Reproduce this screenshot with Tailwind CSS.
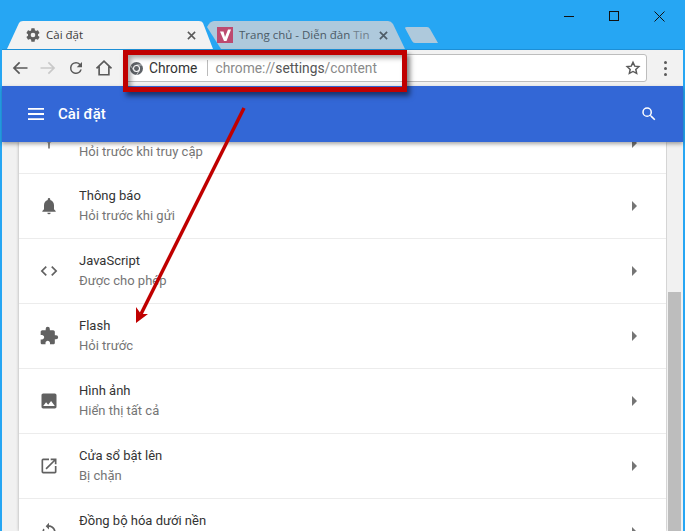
<!DOCTYPE html>
<html lang="vi">
<head>
  <meta charset="UTF-8">
  <title>Cài đặt</title>
  <script src="https://cdn.jsdelivr.net/npm/@tailwindcss/browser@4"></script>
</head>
<body class="w-[685px] h-[531px] overflow-hidden bg-white font-['Roboto',sans-serif]">
<div class="relative w-[685px] h-[531px] overflow-hidden bg-[#26a6f3] pl-[2px] pr-[2px] flex flex-col">
  <!-- title bar + tabs -->
  <div class="relative h-[49px] shrink-0 flex items-end pl-[5px]">
    <div class="relative w-[206px] h-[28px] shrink-0 flex items-center pl-[18px] pr-[17px]">
      <svg class="absolute inset-0" width="206" height="28" viewBox="0 0 206 28"><path d="M0 28 L12 2 Q13 0 16 0 L192 0 Q195 0 196 2 L206 28 Z" fill="#f2f2f2"/></svg>
      <svg class="relative mr-[5px]" width="16" height="16" viewBox="0 0 24 24" fill="#5f5f5f"><path d="M19.400 13c.04-.32.1-.66.1-1s-.06-.68-.1-1l2.100-1.650c.2-.15.25-.42.13-.64l-2-3.460c-.12-.22-.4-.3-.6-.22l-2.500 1c-.52-.4-1.080-.73-1.700-.98l-.37-2.650A.5.5 0 0 0 14 2h-4a.5.5 0 0 0-.5.42l-.37 2.650c-.62.25-1.180.59-1.700.98l-2.500-1c-.22-.08-.48 0-.6.22l-2 3.460c-.13.22-.07.49.12.64L4.570 11c-.04.32-.07.66-.07 1s.03.68.07 1l-2.100 1.650c-.2.15-.25.42-.13.64l2 3.460c.12.22.4.3.6.22l2.500-1c.52.4 1.080.73 1.700.98l.37 2.650c.04.24.25.42.5.42h4c.25 0 .46-.18.5-.42l.37-2.650c.62-.25 1.180-.59 1.700-.98l2.500 1c.22.08.48 0 .6-.22l2-3.460c.12-.22.07-.49-.12-.64L19.400 13zM12 15.500a3.500 3.500 0 1 1 0-7 3.500 3.500 0 0 1 0 7z"/></svg>
      <span class="relative text-[11.500px] text-[#3c3c3c] font-['Open_Sans',sans-serif]">Cài đặt</span>
      <svg class="relative ml-auto" width="9" height="9" viewBox="0 0 10 10" stroke="#5a5a5a" stroke-width="1.700"><path d="M1 1l8 8M9 1l-8 8"/></svg>
    </div>
    <div class="relative -ml-[6px] w-[198px] h-[28px] shrink-0 flex items-center pl-[10px] pr-[17px]">
      <svg class="absolute inset-0" width="198" height="28" viewBox="0 0 198 28"><path d="M0 6 Q3 0 7 0 L181 0 Q184 0 186 3 L198 28 L14 28 Z" fill="#aec9dc"/></svg>
      <svg class="relative mr-[6px] shrink-0" width="16" height="16" viewBox="0 0 16 16"><rect width="16" height="16" fill="#bd4a70"/><path d="M3 4.500h3.500L8 10l3-7.500h3L9.500 14H7z" fill="#fff"/></svg>
      <span class="relative text-[11.500px] whitespace-nowrap text-[#4b5a66] font-['Open_Sans',sans-serif]">Trang chủ - Diễn đàn <span class="text-[#71808c]">Tin</span></span>
      <svg class="relative ml-auto" width="9" height="9" viewBox="0 0 10 10" stroke="#4f5d68" stroke-width="1.900"><path d="M1 1l8 8M9 1l-8 8"/></svg>
    </div>
    <svg class="mb-[6px]" width="33" height="16" viewBox="0 0 33 16"><path d="M0 1 Q0 0 2 0 L22 0 Q24 0 25 2 L33 16 L10 16 Q8 16 7 14 Z" fill="#aec9dc"/></svg>
    <!-- window buttons -->
    <div class="absolute top-[10px] right-[18px] flex items-center gap-[35px]">
      <svg width="10" height="12" viewBox="0 0 10 12" stroke="#111"><path d="M0 6.500h10"/></svg>
      <svg width="10" height="10" viewBox="0 0 10 10" fill="none" stroke="#111"><rect x=".5" y=".5" width="9" height="9"/></svg>
      <svg width="11" height="11" viewBox="0 0 11 11" stroke="#111"><path d="M.5.5l10 10M10.500.5l-10 10"/></svg>
    </div>
  </div>

  <!-- toolbar -->
  <div class="h-[37px] shrink-0 bg-[#f2f2f2] flex items-center pl-[9px] pr-[9px] border-t border-[#1d8fd6]">
    <svg width="18" height="18" viewBox="0 0 24 24" fill="none" stroke="#5a5a5a" stroke-width="2.300"><path d="M22 12H4M11.500 4.500 4 12l7.500 7.500"/></svg>
    <svg class="ml-[10px]" width="18" height="18" viewBox="0 0 24 24" fill="none" stroke="#c9c9c9" stroke-width="2.300"><path d="M2 12h18M12.500 4.500 20 12l-7.500 7.500"/></svg>
    <svg class="ml-[10px]" width="18" height="18" viewBox="0 0 24 24" fill="#5a5a5a"><path d="M17.650 6.350A7.960 7.960 0 0 0 12 4a8 8 0 1 0 7.730 10h-2.080A6 6 0 1 1 12 6c1.660 0 3.140.69 4.220 1.780L13 11h7V4l-2.350 2.350z"/></svg>
    <svg class="ml-[10px]" width="18" height="18" viewBox="0 0 24 24" fill="none" stroke="#5a5a5a" stroke-width="2.200"><path d="M2 12.500 12 3l10 9.500M5.500 10v11h13V10"/></svg>
    <div class="ml-[10px] h-[28px] w-[524px] shrink-0 bg-white border border-[#bdbdbd] rounded-[3px] flex items-center pl-[6px] pr-[5px] text-[13.800px]">
      <svg width="13" height="13" viewBox="0 0 24 24" fill="#5f6368"><circle cx="12" cy="12" r="12"/><circle cx="12" cy="12" r="6.500" fill="#fff"/><circle cx="12" cy="12" r="4.500"/><path d="M12 5.500h11M6.400 15.200 1 6M17.600 15.200 12 24" stroke="#fff" stroke-width="1.200"/></svg>
      <span class="ml-[6px] text-[#333]">Chrome</span>
      <span class="ml-[10px] w-px h-[16px] bg-[#bbb]"></span>
      <span class="ml-[7px] text-[#8a8a8a]">chrome://<span class="text-[#555]">settings</span>/content</span>
      <svg class="ml-auto" width="16" height="16" viewBox="0 0 24 24" fill="none" stroke="#5a5a5a" stroke-width="2.200"><path d="M12 3.500l2.600 5.700 6.200.7-4.600 4.200 1.300 6.100L12 17.200l-5.500 3 1.300-6.100L3.200 9.900l6.200-.7z"/></svg>
    </div>
    <div class="ml-[17px] flex flex-col gap-[3px]">
      <span class="w-[3px] h-[3px] rounded-full bg-[#5a5a5a]"></span>
      <span class="w-[3px] h-[3px] rounded-full bg-[#5a5a5a]"></span>
      <span class="w-[3px] h-[3px] rounded-full bg-[#5a5a5a]"></span>
    </div>
  </div>

  <!-- settings header -->
  <div class="relative z-10 h-[56px] shrink-0 bg-[#3367d6] shadow-[0_2px_4px_rgba(0,0,0,0.35)] flex items-center pl-[26px] pr-[25px] text-white">
    <svg width="16" height="12" viewBox="0 0 16 12" fill="#fff"><path d="M0 0h16v1.800H0zM0 5.100h16v1.800H0zM0 10.200h16V12H0z"/></svg>
    <span class="ml-[14px] text-[15px] font-medium">Cài đặt</span>
    <svg class="ml-auto" width="18" height="18" viewBox="0 0 24 24" fill="#fff"><path d="M15.500 14h-.79l-.28-.27A6.470 6.470 0 0 0 16 9.500 6.500 6.500 0 1 0 9.500 16c1.610 0 3.090-.59 4.230-1.570l.27.28v.79l5 4.990L20.490 19l-4.990-5zm-6 0a4.500 4.500 0 1 1 0-9 4.500 4.500 0 0 1 0 9z"/></svg>
  </div>

  <!-- content -->
  <div class="flex-1 min-h-0 bg-[#f1f1f1] flex overflow-hidden">
    <div class="ml-[17px] w-[647px] bg-white shadow-[0_0_3px_rgba(0,0,0,0.3)] flex flex-col">
      <!-- cut-off first row -->
      <div class="h-[32px] shrink-0 border-b border-[#ececec] flex items-end pb-[13px] pr-[29px] relative">
        <svg class="absolute left-[20px] -top-[11px]" width="20" height="20" viewBox="0 0 24 24" fill="none" stroke="#757575" stroke-width="2"><circle cx="12" cy="8" r="5"/><path d="M12 14v7"/></svg>
        <span class="ml-[60px] text-[13px] leading-[16px] text-[#757575]">Hỏi trước khi truy cập</span>
        <span class="absolute right-[29px] -top-[4px] w-0 h-0 border-y-[5px] border-y-transparent border-l-[5px] border-l-[#757575]"></span>
      </div>
      <!-- Thông báo -->
      <div class="h-[65px] shrink-0 border-b border-[#ececec] flex items-center pl-[20px] pr-[29px]">
        <svg width="20" height="20" viewBox="0 0 24 24" fill="#616161"><path d="M12 22a2 2 0 0 0 2-2h-4a2 2 0 0 0 2 2zm6-6v-5c0-3.070-1.640-5.640-4.500-6.320V4a1.500 1.500 0 0 0-3 0v.68C7.630 5.360 6 7.920 6 11v5l-2 2v1h16v-1l-2-2z"/></svg>
        <div class="ml-[20px] flex flex-col gap-[4px]">
          <span class="text-[13px] leading-[16px] text-[#333]">Thông báo</span>
          <span class="text-[13px] leading-[16px] text-[#757575]">Hỏi trước khi gửi</span>
        </div>
        <span class="ml-auto w-0 h-0 border-y-[5px] border-y-transparent border-l-[5px] border-l-[#757575]"></span>
      </div>
      <!-- JavaScript -->
      <div class="h-[65px] shrink-0 border-b border-[#ececec] flex items-center pl-[20px] pr-[29px]">
        <svg width="20" height="20" viewBox="0 0 24 24" fill="#616161"><path d="M9.400 16.600 4.800 12l4.600-4.600L8 6l-6 6 6 6 1.400-1.400zm5.200 0 4.600-4.600-4.600-4.600L16 6l6 6-6 6-1.400-1.400z"/></svg>
        <div class="ml-[20px] flex flex-col gap-[4px]">
          <span class="text-[13px] leading-[16px] text-[#333]">JavaScript</span>
          <span class="text-[13px] leading-[16px] text-[#757575]">Được cho phép</span>
        </div>
        <span class="ml-auto w-0 h-0 border-y-[5px] border-y-transparent border-l-[5px] border-l-[#757575]"></span>
      </div>
      <!-- Flash -->
      <div class="h-[65px] shrink-0 border-b border-[#ececec] flex items-center pl-[20px] pr-[29px]">
        <svg width="20" height="20" viewBox="0 0 24 24" fill="#616161"><path d="M20.500 11H19V7c0-1.100-.9-2-2-2h-4V3.500a2.500 2.500 0 0 0-5 0V5H4c-1.100 0-1.990.9-1.990 2v3.800H3.500c1.490 0 2.700 1.210 2.700 2.700s-1.210 2.700-2.700 2.700H2V20c0 1.100.9 2 2 2h3.800v-1.500c0-1.490 1.210-2.700 2.700-2.700s2.700 1.210 2.700 2.700V22H17c1.100 0 2-.9 2-2v-4h1.500a2.500 2.500 0 0 0 0-5z"/></svg>
        <div class="ml-[20px] flex flex-col gap-[4px]">
          <span class="text-[13px] leading-[16px] text-[#333]">Flash</span>
          <span class="text-[13px] leading-[16px] text-[#757575]">Hỏi trước</span>
        </div>
        <span class="ml-auto w-0 h-0 border-y-[5px] border-y-transparent border-l-[5px] border-l-[#757575]"></span>
      </div>
      <!-- Hình ảnh -->
      <div class="h-[65px] shrink-0 border-b border-[#ececec] flex items-center pl-[20px] pr-[29px]">
        <svg width="20" height="20" viewBox="0 0 24 24" fill="#616161"><path d="M21 19V5c0-1.100-.9-2-2-2H5c-1.100 0-2 .9-2 2v14c0 1.100.9 2 2 2h14c1.100 0 2-.9 2-2zM8.500 13.500l2.500 3.010L14.500 12l4.500 6H5l3.500-4.500z"/></svg>
        <div class="ml-[20px] flex flex-col gap-[4px]">
          <span class="text-[13px] leading-[16px] text-[#333]">Hình ảnh</span>
          <span class="text-[13px] leading-[16px] text-[#757575]">Hiển thị tất cả</span>
        </div>
        <span class="ml-auto w-0 h-0 border-y-[5px] border-y-transparent border-l-[5px] border-l-[#757575]"></span>
      </div>
      <!-- Cửa sổ bật lên -->
      <div class="h-[65px] shrink-0 border-b border-[#ececec] flex items-center pl-[20px] pr-[29px]">
        <svg width="20" height="20" viewBox="0 0 24 24" fill="#616161"><path d="M19 19H5V5h7V3H5a2 2 0 0 0-2 2v14a2 2 0 0 0 2 2h14c1.100 0 2-.9 2-2v-7h-2v7zM14 3v2h3.590l-9.830 9.830 1.410 1.410L19 6.410V10h2V3h-7z"/></svg>
        <div class="ml-[20px] flex flex-col gap-[4px]">
          <span class="text-[13px] leading-[16px] text-[#333]">Cửa sổ bật lên</span>
          <span class="text-[13px] leading-[16px] text-[#757575]">Bị chặn</span>
        </div>
        <span class="ml-auto w-0 h-0 border-y-[5px] border-y-transparent border-l-[5px] border-l-[#757575]"></span>
      </div>
      <!-- Đồng bộ hóa dưới nền: subtitle is below the fold -->
      <div class="h-[65px] shrink-0 flex items-center pl-[20px] pr-[29px]">
        <svg width="20" height="20" viewBox="0 0 24 24" fill="#616161"><path d="M12 4V1L8 5l4 4V6c3.310 0 6 2.690 6 6 0 1.010-.25 1.970-.7 2.800l1.460 1.460A7.930 7.930 0 0 0 20 12c0-4.420-3.580-8-8-8zm0 14c-3.310 0-6-2.690-6-6 0-1.010.25-1.970.7-2.800L5.240 7.740A7.930 7.930 0 0 0 4 12c0 4.420 3.580 8 8 8v3l4-4-4-4v3z"/></svg>
        <div class="ml-[20px] self-start mt-[14px]">
          <span class="block text-[13px] leading-[16px] text-[#333]">Đồng bộ hóa dưới nền</span>
        </div>
        <span class="ml-auto w-0 h-0 border-y-[5px] border-y-transparent border-l-[5px] border-l-[#757575]"></span>
      </div>
    </div>
    <!-- scrollbar -->
    <div class="ml-[1px] flex-1 bg-[#f1f1f1] pl-[1px] pr-[2px] pt-[150px]">
      <div class="h-full bg-[#bdbdbd]"></div>
    </div>
  </div>

  <!-- annotation: red box -->
  <div class="absolute z-20 left-[123px] top-[50px] w-[284px] h-[42px] border-[5px] border-[#c00000] shadow-[3px_4px_5px_rgba(0,0,0,0.5),inset_3px_3px_5px_rgba(0,0,0,0.35)]"></div>
  <!-- annotation: arrow -->
  <svg class="absolute z-20 left-0 top-0" width="685" height="531" viewBox="0 0 685 531">
    <path d="M244 108 L141 314" stroke="#c00000" stroke-width="3.500" fill="none"/>
    <path d="M136 323 L136 307 L141 314 L148 314 Z" fill="#c00000"/>
  </svg>
</div>
</body>
</html>
